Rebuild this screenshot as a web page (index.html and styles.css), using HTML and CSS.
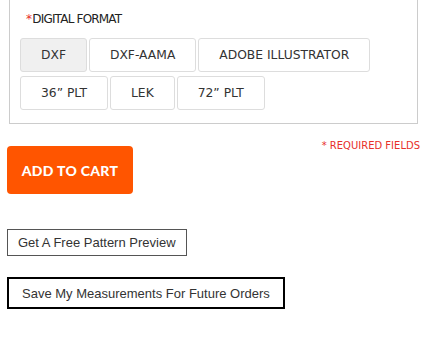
FILE: index.html
```html
<!DOCTYPE html>
<html lang="en">
<head>
  <meta charset="UTF-8" />
  <meta name="viewport" content="width=device-width, initial-scale=1.0"/>
  <title>Pattern Order</title>
  <link rel="stylesheet" href="styles.css">
</head>
<body>
<div class="page">
  <div class="panel">
    <div class="label"><span class="req">*</span>DIGITAL FORMAT</div>
    <div class="options">
      <button class="opt selected">DXF</button>
      <button class="opt">DXF-AAMA</button>
      <button class="opt">ADOBE ILLUSTRATOR</button>
      <button class="opt">36&rdquo; PLT</button>
      <button class="opt">LEK</button>
      <button class="opt">72&rdquo; PLT</button>
    </div>
  </div>

  <div class="cartrow">
    <button class="addcart">ADD TO CART</button>
    <div class="note">* REQUIRED FIELDS</div>
  </div>

  <button class="linkbtn preview">Get A Free Pattern Preview</button>
  <button class="linkbtn save">Save My Measurements For Future Orders</button>
</div>
</body>
</html>
```

FILE: styles.css
```css
* { box-sizing: border-box; }
body {
  margin: 0;
  background: #fff;
  font-family: "DejaVu Sans", Verdana, sans-serif;
  color: #333;
  overflow: hidden;
}
.page {
  display: flex;
  flex-direction: column;
  align-items: flex-start;
}
.panel {
  align-self: stretch;
  margin: -20px 9px 0 9px;
  border: 1px solid #ccc;
  padding: 30px 10px 13px 10px;
}
.label {
  margin-left: 6px;
  font-size: 12px;
  letter-spacing: -0.8px;
  line-height: 16px;
  color: #222;
}
.req { color: #e8302a; margin-right: 1px; }
.options {
  display: flex;
  flex-wrap: wrap;
  gap: 4px 2px;
  margin-top: 11px;
}
.opt {
  height: 34px;
  padding: 0 20px;
  border: 1px solid #ddd;
  border-radius: 3px;
  background: #fff;
  font-family: "DejaVu Sans", Verdana, sans-serif;
  font-size: 12.3px;
  color: #333;
  cursor: pointer;
}
.opt.selected { background: #f0f0f0; }
.cartrow {
  align-self: stretch;
  display: flex;
  justify-content: space-between;
  align-items: flex-start;
  margin-top: 13px;
  padding: 0 7px;
}
.addcart {
  margin-top: 9px;
  width: 126px;
  height: 48px;
  border: none;
  border-radius: 4px;
  background: #ff5500;
  color: #fff;
  font-family: Lato, sans-serif;
  font-weight: 900;
  font-size: 14px;
  letter-spacing: 0.3px;
  cursor: pointer;
}
.note {
  padding-top: 2px;
  font-size: 10px;
  line-height: 14px;
  color: #e8302a;
}
.linkbtn {
  margin-left: 7px;
  background: #fff;
  font-family: "Liberation Sans", Arial, sans-serif;
  font-size: 13px;
  color: #333;
  cursor: pointer;
}
.preview {
  margin-top: 35px;
  height: 27px;
  padding: 0 10px;
  border: 1px solid #555;
}
.save {
  margin-top: 21px;
  height: 32px;
  padding: 0 13px;
  border: 2px solid #000;
}
```
